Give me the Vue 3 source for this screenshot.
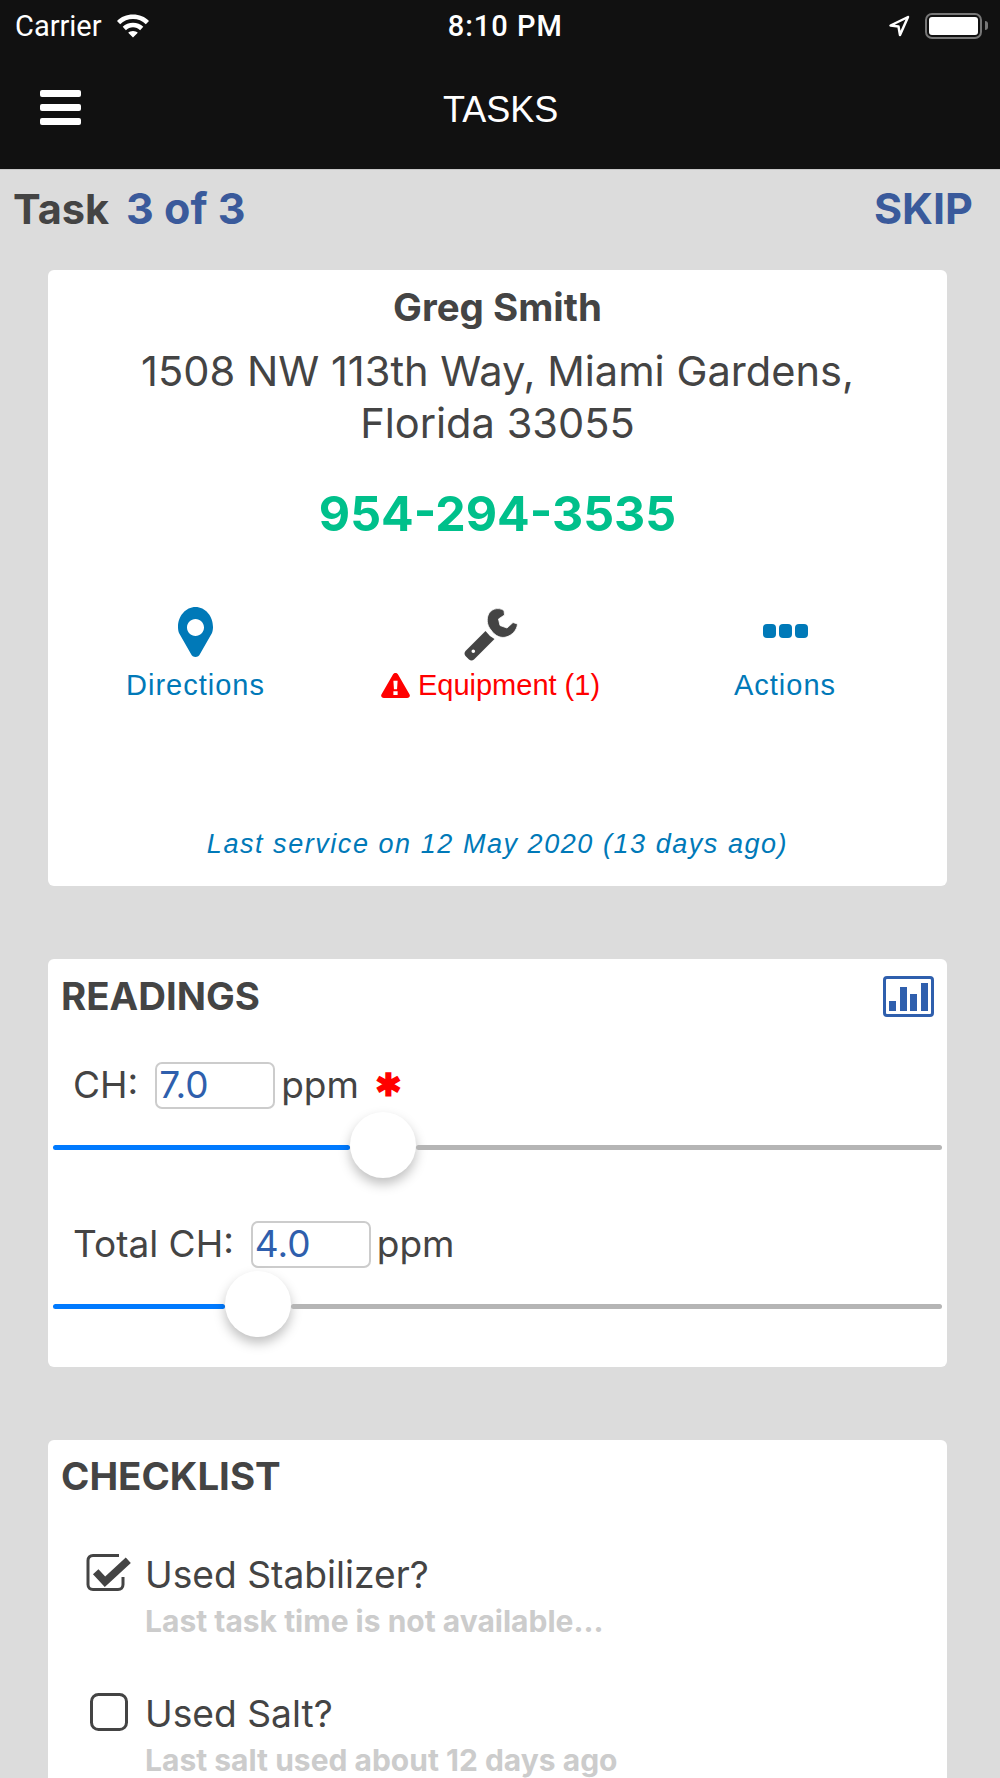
<template>
  <div class="screen">
    <header class="top">
      <div class="status">
        <div class="status-left">
          <span>Carrier</span>
          <svg class="wifi" viewBox="0 0 34 24" width="34" height="25">
            <path d="M17 1C10.500 1 5 3.400 1 7.400l3.200 3.400C7.600 7.500 12 5.600 17 5.600s9.400 1.900 12.800 5.200L33 7.400C29 3.400 23.500 1 17 1z" fill="#fff"/>
            <path d="M17 9.200c-4 0-7.600 1.500-10.300 4.100l3.200 3.400c1.900-1.800 4.400-2.900 7.100-2.900s5.200 1.100 7.100 2.900l3.200-3.400c-2.700-2.600-6.300-4.100-10.300-4.100z" fill="#fff"/>
            <path d="M17 17.400c-2 0-3.700.7-4.800 1.800L17 24l4.800-4.800c-1.100-1.100-2.800-1.800-4.800-1.800z" fill="#fff"/>
          </svg>
        </div>
        <span class="time">8:10 PM</span>
        <div class="status-right">
          <svg viewBox="0 0 22 22" width="22" height="22">
            <path d="M20 2L2.500 10.500L10.500 11.500L12 20z" fill="none" stroke="#fff" stroke-width="2.500" stroke-linejoin="round"/>
          </svg>
          <div class="battery"><div class="battery-fill"></div></div>
          <div class="battery-nub"></div>
        </div>
      </div>
      <div class="nav">
        <div class="burger"><i></i><i></i><i></i></div>
        <span class="nav-title">TASKS</span>
      </div>
    </header>

    <div class="progress">
      <div>
        <span class="task-label">Task</span>
        <span class="task-count">3 of 3</span>
      </div>
      <span class="skip">SKIP</span>
    </div>

    <section class="card customer">
      <div class="name">Greg Smith</div>
      <div class="address">1508 NW 113th Way, Miami Gardens,<br>Florida 33055</div>
      <div class="phone">954-294-3535</div>
      <div class="actions">
        <div class="action">
          <svg viewBox="0 0 35 50" width="35" height="50">
            <path fill-rule="evenodd" fill="#0079b8" d="M17.500 0C7.800 0 0 9 0 20c0 2.500.4 4.200 1 6l12 21c1.400 4 7.600 4 9 0l12-21c.6-1.800 1-3.500 1-6C35 9 27.200 0 17.500 0zm0 12c4.700 0 8.500 3.800 8.500 8.500S22.200 29 17.500 29 9 25.200 9 20.500 12.800 12 17.500 12z"/>
          </svg>
          <span class="action-label">Directions</span>
        </div>
        <div class="action">
          <svg class="wrench" viewBox="0 0 54 54" width="54" height="54">
            <path fill-rule="evenodd" fill="#444" d="M21.500 24L1.500 44Q-.5 46.500 1.500 49L5 52.500Q7.500 54.500 10 52.500L30.500 32Q25 29 21.500 24zM9.300 42.500a1.800 1.800 0 1 1 0 3.600a1.800 1.800 0 1 1 0-3.600z"/>
            <path fill="#444" stroke="#fff" stroke-width=".8" d="M40 3.500C34-.5 26 2 23.800 9C22.500 14 23.500 19 27 23C31 29 37 31.500 42 30C48 28.500 53 23 53.500 17L49 15.500L43 21L36 18.500L34.500 12L40.500 8z"/>
          </svg>
          <span class="action-label alert">
            <svg viewBox="0 0 30 26" width="29" height="25">
              <path fill-rule="evenodd" fill="#f00" d="M15 0c-1.200 0-2.200.6-2.800 1.700L.5 22c-1.200 2 .2 4 2.500 4h24c2.300 0 3.700-2 2.500-4L17.800 1.700C17.200.6 16.200 0 15 0zm-2.200 8h4.400l-.6 9h-3.200zm0 11h4.400v4h-4.400z"/>
            </svg>
            Equipment (1)
          </span>
        </div>
        <div class="action">
          <div class="dots"><i></i><i></i><i></i></div>
          <span class="action-label">Actions</span>
        </div>
      </div>
      <div class="last-service">Last service on 12 May 2020 (13 days ago)</div>
    </section>

    <section class="card readings">
      <div class="card-head">
        <h2>READINGS</h2>
        <div class="chart">
          <i v-for="h in barHeights" :key="h" :style="{ height: h + 'px' }"></i>
        </div>
      </div>
      <div v-for="r in readings" :key="r.label" class="reading">
        <div class="reading-row">
          <span>{{ r.label }}:</span>
          <input class="reading-input" :value="r.value" readonly>
          <span>ppm</span>
          <span v-if="r.required" class="required">✱</span>
        </div>
        <div class="slider">
          <div class="track-on" :style="{ width: r.fill + 'px' }"></div>
          <div class="thumb"></div>
          <div class="track-off"></div>
        </div>
      </div>
    </section>

    <section class="card checklist">
      <h2>CHECKLIST</h2>
      <div v-for="c in checks" :key="c.label" class="check">
        <div>
          <svg v-if="c.done" viewBox="0 0 46 40" width="46" height="40">
            <path d="M34 3.500H8C5 3.500 3 5.500 3 8.500V32.500c0 3 2 5 5 5h25c3 0 5-2 5-5V25" fill="none" stroke="#444" stroke-width="3"/>
            <path d="M10.700 19.700L20 29.700L43.300 8.300" fill="none" stroke="#444" stroke-width="7.500"/>
          </svg>
          <svg v-else viewBox="0 0 46 40" width="46" height="40">
            <rect x="6.500" y="3.500" width="35" height="35" rx="7" fill="none" stroke="#444" stroke-width="3"/>
          </svg>
        </div>
        <div>
          <div class="check-label">{{ c.label }}</div>
          <div class="check-note">{{ c.note }}</div>
        </div>
      </div>
    </section>
  </div>
</template>

<script setup>
const barHeights = [10, 24, 17, 28]

const readings = [
  { label: 'CH', value: '7.0', fill: 297, required: true },
  { label: 'Total CH', value: '4.0', fill: 172, required: false },
]

const checks = [
  { label: 'Used Stabilizer?', note: 'Last task time is not available...', done: true },
  { label: 'Used Salt?', note: 'Last salt used about 12 days ago', done: false },
]
</script>

<style>
html, body {
  margin: 0;
  background: #dcdcdc;
}
</style>

<style scoped>
.screen {
  width: 1000px;
  min-height: 1778px;
  background: #dcdcdc;
  color: #444;
  font-family: Inter, "Liberation Sans", sans-serif;
}

.top {
  height: 169px;
  background: #111;
  color: #fff;
}

.status {
  height: 50px;
  padding: 1px 12px 0 15px;
  box-sizing: border-box;
  display: flex;
  justify-content: space-between;
  align-items: center;
  font-size: 29px;
  font-family: Roboto, sans-serif;
}

.status-left, .status-right {
  display: flex;
  align-items: center;
}

.wifi {
  margin-left: 14px;
}

.time {
  margin-left: -27px;
  font-weight: 500;
  font-size: 29px;
  letter-spacing: 1px;
}

.status-right svg {
  margin-right: 15px;
}

.battery {
  width: 49px;
  height: 18px;
  padding: 2px;
  border: 2px solid #777;
  border-radius: 7px;
}

.battery-fill {
  height: 100%;
  background: #fff;
  border-radius: 3px;
}

.battery-nub {
  width: 3px;
  height: 9px;
  margin-left: 3px;
  background: #777;
  border-radius: 0 3px 3px 0;
}

.nav {
  height: 119px;
  padding: 0 40px 4px;
  box-sizing: border-box;
  display: flex;
  align-items: center;
}

.burger {
  width: 41px;
  display: flex;
  flex-direction: column;
  gap: 7px;
}

.burger i {
  height: 7px;
  background: #fff;
  border-radius: 2px;
}

.nav-title {
  margin: 4px 0 0 362px;
  font-size: 36px;
  font-family: "Liberation Sans", sans-serif;
}

.progress {
  height: 76px;
  padding: 0 27px 0 13px;
  display: flex;
  justify-content: space-between;
  align-items: center;
  font-size: 43px;
  font-weight: 700;
  border-top: 1px solid #c8c8c8;
}

.task-label {
  margin-right: 17px;
  font-size: 41.500px;
}

.task-count, .skip {
  color: #3a5a9b;
}

.card {
  margin: 0 53px 0 48px;
  background: #fff;
  border-radius: 6px;
}

.customer {
  margin-top: 24px;
  height: 616px;
  padding-top: 14px;
  box-sizing: border-box;
  text-align: center;
  display: flex;
  flex-direction: column;
}

.name {
  font-size: 38.500px;
  font-weight: 700;
  line-height: 46px;
}

.address {
  margin-top: 15px;
  font-size: 41.600px;
  line-height: 52px;
}

.phone {
  margin-top: 35px;
  color: #00c08b;
  font-size: 48.300px;
  font-weight: 700;
  line-height: 60px;
}

.actions {
  margin-top: 59px;
  display: grid;
  grid-template-columns: 295px 295px 294px;
}

.action {
  height: 100px;
  display: flex;
  flex-direction: column;
  align-items: center;
  justify-content: flex-end;
}

.wrench {
  margin-bottom: -4px;
}

.action-label {
  color: #0079b8;
  font-family: "Liberation Sans", sans-serif;
  font-size: 29px;
  letter-spacing: 1px;
  line-height: 36px;
  margin-top: 10px;
}

.alert {
  color: #f00;
  display: flex;
  align-items: center;
  gap: 8px;
  letter-spacing: 0;
}

.dots {
  display: flex;
  gap: 3px;
  margin-bottom: 19px;
}

.dots i {
  width: 13px;
  height: 14px;
  background: #0079b8;
  border-radius: 4px;
}

.last-service {
  margin-top: auto;
  margin-bottom: 26px;
  color: #0079b8;
  font-family: "Liberation Sans", sans-serif;
  font-style: italic;
  font-size: 27px;
  letter-spacing: 1.550px;
}

.readings {
  margin-top: 73px;
  height: 408px;
  padding: 14px 5px 0;
  box-sizing: border-box;
}

.card-head {
  display: flex;
  justify-content: space-between;
  align-items: center;
  padding: 0 8px;
}

h2 {
  margin: 0;
  font-size: 38.400px;
  font-weight: 700;
  line-height: 46px;
}

.chart {
  width: 51px;
  height: 41px;
  padding: 0 3px 3px;
  box-sizing: border-box;
  display: flex;
  align-items: flex-end;
  justify-content: space-between;
  border: 3px solid #2f5fad;
  border-radius: 4px;
}

.chart i {
  width: 7px;
  background: #2f5fad;
}

.reading {
  margin-top: 42px;
}

.reading + .reading {
  margin-top: 39px;
}

.reading-row {
  display: flex;
  align-items: center;
  padding-left: 20px;
  font-size: 37px;
  line-height: 48px;
}

.reading-input {
  width: 120px;
  height: 47px;
  box-sizing: border-box;
  margin: 0 6px 0 17px;
  padding: 0 2px;
  border: 2px solid #ccc;
  border-radius: 7px;
  color: #2f5fad;
  font: inherit;
  outline: none;
}

.required {
  margin-left: 16px;
  color: #f00;
  font-size: 32px;
  font-weight: 700;
}

.slider {
  display: flex;
  align-items: center;
  height: 67px;
  margin-top: 5px;
}

.track-on, .track-off {
  height: 5px;
  border-radius: 3px;
}

.track-on {
  background: #007aff;
}

.track-off {
  flex: 1;
  background: #b5b5b5;
}

.thumb {
  width: 66px;
  height: 66px;
  margin-bottom: 6px;
  border-radius: 50%;
  background: #fff;
  box-shadow: 0 6px 12px rgba(0, 0, 0, 0.25);
  flex-shrink: 0;
}

.checklist {
  margin-top: 73px;
  padding: 13px 13px 24px;
}

.check {
  display: flex;
  gap: 14px;
  margin: 53px 0 0 24px;
}

.check + .check {
  margin-top: 53px;
}

.check-label {
  font-size: 37.200px;
  line-height: 46px;
}

.check-note {
  margin-top: 6px;
  color: #ccc;
  font-size: 30px;
  font-weight: 700;
  line-height: 34px;
}
</style>
